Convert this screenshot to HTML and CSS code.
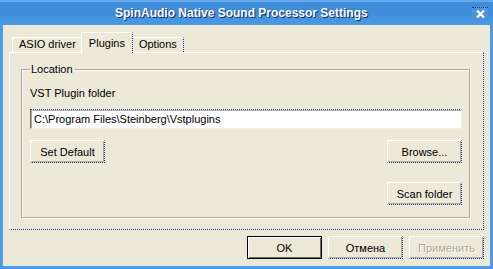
FILE: index.html
```html
<!DOCTYPE html>
<html lang="ru">
<head>
    <meta charset="UTF-8">
    <title>SpinAudio Native Sound Processor Settings</title>
    <link rel="stylesheet" href="styles.css">
</head>
<body>
    <div class="window">
        <div class="titlebar">
            <span class="title">SpinAudio Native Sound Processor Settings</span>
            <span class="close">
                <svg width="9" height="8" viewBox="0 0 9 8">
                    <path d="M1 0.5 L8 7.5 M8 0.5 L1 7.5" stroke="#fff" stroke-width="2.2" fill="none"/>
                </svg>
            </span>
        </div>
        <div class="client">
            <div class="tabs">
                <div class="tab">ASIO driver</div>
                <div class="tab active">Plugins</div>
                <div class="tab">Options</div>
            </div>
            <div class="panel">
                <fieldset class="group">
                    <legend>Location</legend>
                    <label class="field-label" for="vstFolder">VST Plugin folder</label>
                    <input type="text" id="vstFolder" class="field" value="C:\Program Files\Steinberg\Vstplugins">
                    <div class="row">
                        <button class="btn">Set Default</button>
                        <button class="btn">Browse...</button>
                    </div>
                    <div class="row right">
                        <button class="btn scan">Scan folder</button>
                    </div>
                </fieldset>
            </div>
            <div class="footer">
                <button class="btn default">OK</button>
                <button class="btn">Отмена</button>
                <button class="btn" disabled>Применить</button>
            </div>
        </div>
    </div>
</body>
</html>
```

FILE: styles.css
```css
* {
    margin: 0;
    padding: 0;
    box-sizing: border-box;
}

body {
    width: 493px;
    height: 269px;
    overflow: hidden;
    font-family: "Liberation Sans", Arial, sans-serif;
    font-size: 11px;
    color: #000;
    background: #4a98e2;
}

.window {
    width: 493px;
    height: 269px;
    display: flex;
    flex-direction: column;
    padding: 0 3px 3px;
    background: #4d9be4;
}

/* Заголовок окна */
.titlebar {
    height: 25px;
    margin: 0 -3px;
    display: flex;
    align-items: center;
    background: linear-gradient(#62a8ec 0, #62a8ec 2px, #3f8cd8 2px, #3f8cd8 16px, #4794de 16px, #4a98e2 25px);
}

.title {
    margin-left: 115px;
    flex: 1;
    color: #fff;
    font-weight: bold;
    font-size: 12px;
    text-shadow: 1px 1px 0 #0c2a78;
}

.close {
    width: 16px;
    height: 14px;
    margin-right: 5px;
    margin-top: 2px;
    display: flex;
    align-items: center;
    justify-content: center;
    border-top: 1px dotted #1f3a90;
    background: #4b93dc;
}

.close svg {
    display: block;
}

/* Клиентская область */
.client {
    flex: 1;
    display: flex;
    flex-direction: column;
    background: #ece9d8;
}

.tabs {
    height: 21px;
    margin: 6px 0 0 9px;
    display: flex;
    align-items: flex-end;
}

.tab {
    height: 15px;
    padding: 0 6px;
    line-height: 13px;
    border-top: 1px solid #fff;
    border-left: 1px solid #fff;
    border-right: 1px dotted #24359a;
    background: #ece9d8;
}

.tab.active {
    height: 21px;
    margin: 0 -1px -1px -2px;
    padding: 4px 7px 0;
    z-index: 1;
    border-left: 1px solid #fff;
}

.panel {
    height: 178px;
    margin: 0 6px 0 6px;
    padding: 10px 13px 11px 11px;
    display: flex;
    border-top: 1px solid #fff;
    border-left: 1px solid #fff;
    border-right: 1px dotted #24359a;
    border-bottom: 1px dotted #24359a;
}

.group {
    flex: 1;
    min-width: 0;
    padding: 11px 7px 0 8px;
    border: 1px solid #aca899;
    box-shadow: inset 1px 1px 0 #fff, 1px 1px 0 #fff;
}

.group legend {
    padding: 0 1px;
    line-height: 13px;
}

.field-label {
    display: block;
    line-height: 13px;
}

.field {
    display: block;
    width: 100%;
    height: 20px;
    margin-top: 9px;
    padding: 0 3px;
    font: 11px "Liberation Sans", Arial, sans-serif;
    color: #000;
    background: #fff;
    border: 1px solid;
    border-color: #24359a #f1efe2 #f1efe2 #716f64;
    border-top-style: dotted;
    box-shadow: inset 1px 1px 0 #aca899;
    outline: none;
}

.row {
    display: flex;
    justify-content: space-between;
    margin-top: 11px;
}

.row.right {
    justify-content: flex-end;
    margin-top: 19px;
}

/* Кнопки */
.btn {
    width: 75px;
    height: 23px;
    font: 11px "Liberation Sans", Arial, sans-serif;
    color: #000;
    background: #ece9d8;
    border: 1px solid;
    border-color: #fff #24359a #24359a #fff;
    border-right-style: dotted;
    border-bottom-style: dotted;
    box-shadow: inset -1px -1px 0 #aca899;
}

.btn.default {
    border: 1px solid #000;
    box-shadow: inset 1px 1px 0 #fff, inset -1px -1px 0 #716f64;
}

.btn:disabled {
    color: #aca899;
    text-shadow: 1px 1px 0 #fff;
}

.footer {
    display: flex;
    justify-content: flex-end;
    gap: 6px;
    margin-top: 6px;
    padding-right: 6px;
}
```
